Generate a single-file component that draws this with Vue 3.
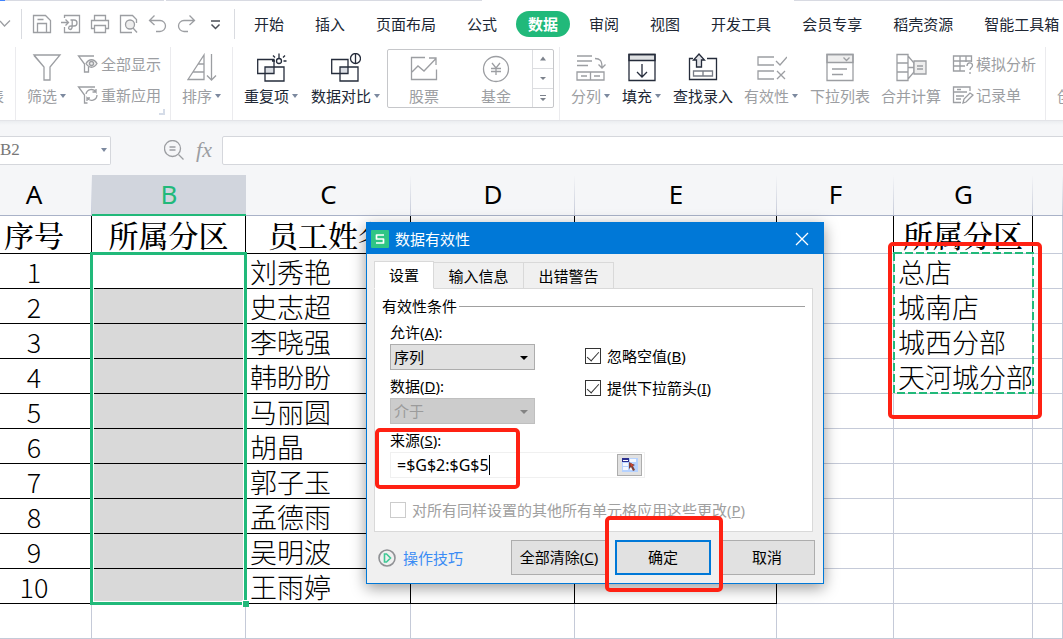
<script setup>
import { ref } from 'vue'

const menus = ['开始', '插入', '页面布局', '公式', '数据', '审阅', '视图', '开发工具', '会员专享', '稻壳资源', '智能工具箱']
const activeMenu = ref('数据')

const columns = ['A', 'B', 'C', 'D', 'E', 'F', 'G', 'H']
const headings = ['序号', '所属分区', '员工姓名', '', '', '', '所属分区', '']
const names = ['刘秀艳', '史志超', '李晓强', '韩盼盼', '马丽圆', '胡晶', '郭子玉', '孟德雨', '吴明波', '王雨婷']
const branches = ['总店', '城南店', '城西分部', '天河城分部']

const tabs = ['设置', '输入信息', '出错警告']
const activeTab = ref('设置')
const allow = ref('序列')
const compare = ref('介于')
const source = ref('=$G$2:$G$5')
const ignoreBlank = ref(true)
const showArrow = ref(true)
const applyAll = ref(false)
const nameBox = ref('B2')
const formula = ref('')
</script>

<template>
  <div class="app">
    <div class="strip"><i class="s-blue"></i><i class="s-one"></i><i class="s-two"></i><i class="s-gap"></i><i class="s-three"></i></div>

    <header class="menubar">
      <div class="quick">
        <button class="q-more" aria-label="文件菜单"><svg width="11" height="20" viewBox="0 0 11 20"><path d="M0 7l4.500 5L10 6.500" /></svg></button>
        <i class="bar"></i>
        <div class="q-icons">
          <button aria-label="保存"><svg width="20" height="20" viewBox="0 0 20 20"><path d="M1.500 1.500h12l5 5v12h-17zM5.500 18V9.500h9V18M5.500 5.500h6" /></svg></button>
          <button aria-label="输出为PDF"><svg width="20" height="20" viewBox="0 0 20 20"><path d="M3.500 4V1.500h15v17h-15V13M0 8.500h7M4.500 5.500l3 3-3 3M9.500 6h3.500a3 3 0 0 1 0 6h-3c-3 0-3 3.500-.8 3.500 2 0 2-2 2-3.500V6" /></svg></button>
          <button aria-label="打印"><svg width="20" height="20" viewBox="0 0 20 20"><path d="M4.500 6V1.500h11V6M4.500 14.500h-3v-8h17v8h-3M4.500 11.500h11v7h-11z" /></svg></button>
          <button aria-label="打印预览"><svg width="20" height="20" viewBox="0 0 20 20"><path d="M13 18.500H1.500v-17h12l4 4V9M1.500 5v13" /><circle cx="11" cy="10.500" r="4.500" fill="#eee" /><path d="M14 14l4 4.500" /></svg></button>
          <button aria-label="撤销"><svg width="20" height="20" viewBox="0 0 20 20"><path d="M6.500 1.500l-5 5 5 4.500M2 6.500h10a5 5 0 0 1 0 11H8" /></svg></button>
          <button aria-label="恢复"><svg width="20" height="20" viewBox="0 0 20 20"><path d="M12.500 1.500l5 5-5 4.500M17 6.500H7a5 5 0 0 0 0 11h4" /></svg></button>
          <button aria-label="自定义快速访问"><svg width="20" height="20" viewBox="0 0 20 20"><path class="dark" d="M5 7h9M5.500 10.500l4 4 4-4" /></svg></button>
        </div>
        <i class="bar"></i>
      </div>
      <nav class="menus">
        <button v-for="m in menus" :key="m" :class="{ active: m === activeMenu }" @click="activeMenu = m">{{ m }}</button>
      </nav>
    </header>

    <section class="ribbon">
      <div class="cut-left">表</div>
      <div class="group g-filter">
        <button class="tool off">
          <svg width="30" height="30" viewBox="0 0 30 30"><path d="M2 2h26L18 14v13h-6V14zM2 2.500L12 14" /></svg>
          <span>筛选<i class="caret"></i></span>
        </button>
        <div class="stack">
          <button class="mini off"><svg width="22" height="22" viewBox="0 0 22 22"><path d="M9 3H1.500l6 8v8h4v-5M9 3h8" /><path d="M9 10.500c3-5 8-5 11 0-3 5-8 5-11 0z" fill="#eee" /><circle cx="14.500" cy="10.500" r="2" /></svg>全部显示</button>
          <button class="mini off"><svg width="22" height="22" viewBox="0 0 22 22"><path d="M18 3H1.500l6 8v8h3M9 10a5.500 5.500 0 0 1 10-2v-3M19 8h-3.500M20 11a5.500 5.500 0 0 1-10 3v3M10 14h3" /></svg>重新应用</button>
        </div>
        <i class="corner"></i>
      </div>
      <div class="group g-sort">
        <button class="tool off">
          <svg width="30" height="30" viewBox="0 0 30 30"><path d="M1 26.500L17 2v24.500zM11 11h6M6 19h11M24.500 1v26M20 22.500l4.500 4.500 4.500-4.500" /></svg>
          <span>排序<i class="caret"></i></span>
        </button>
      </div>
      <div class="group g-data">
        <button class="tool">
          <svg width="30" height="30" viewBox="0 0 30 30"><path d="M8 14h9v7H8z" fill="#dcdfe5" stroke="none" /><path d="M.700 6.500H17v14H.700zM8 14h19v14H8zM22 5.500v-5M16 2.500l2 2M28 2.500l-2 2M15 8h3M26.500 8h3" /><circle cx="22" cy="8" r="2.500" /></svg>
          <span>重复项<i class="caret"></i></span>
        </button>
        <button class="tool">
          <svg width="30" height="30" viewBox="0 0 30 30"><path d="M9 14h8v7H9z" fill="#dcdfe5" stroke="none" /><path d="M.700 6.500H17v14H.700zM9 14h18v14H9z" /><circle cx="24.500" cy="5.500" r="5" fill="#fff" /><path d="M24.500.500v10" /></svg>
          <span>数据对比<i class="caret"></i></span>
        </button>
        <div class="gallery">
          <button class="tool off"><svg width="28" height="28" viewBox="0 0 28 28"><path d="M15 2.500H1.500v22h25v-10M2 17l6-6 6 5L26 3.500M19 3h7v7" /></svg><span>股票</span></button>
          <button class="tool off"><svg width="28" height="28" viewBox="0 0 28 28"><circle cx="14" cy="14" r="12.500" /><path d="M10 8l4 5 4-5M9 13.500h10M9 16.500h10M14 13v7" /></svg><span>基金</span></button>
          <div class="spin">
            <button aria-label="向上"><svg width="8" height="8" viewBox="0 0 8 8"><path class="solid" d="M1 5.500l3-4 3 4z" /></svg></button>
            <button aria-label="向下"><svg width="8" height="8" viewBox="0 0 8 8"><path class="solid" d="M1 3l3 3 3-3z" /></svg></button>
            <button aria-label="更多"><svg width="8" height="8" viewBox="0 0 8 8"><path class="solid" d="M1 1h6v1H1zM1 4l3 3 3-3z" /></svg></button>
          </div>
        </div>
      </div>
      <div class="group g-tools">
        <button class="tool off">
          <svg width="30" height="30" viewBox="0 0 30 30"><path d="M1 3h15M1 8h15M1 12.500h11M1 19h27v8H1zM14.500 19v8M5 23h6M18 23h6M19 5.500c5 0 7 2 7 9M22.500 11.500l3.500 3.500 3.500-3.500" /></svg>
          <span>分列<i class="caret"></i></span>
        </button>
        <button class="tool">
          <svg width="30" height="30" viewBox="0 0 30 30"><path d="M2 1.500h26v6H2z" fill="#dfe1e3" /><path d="M2 1.500h26v26H2zM15 11v13M10 19l5 5 5-5" /></svg>
          <span>填充<i class="caret"></i></span>
        </button>
        <button class="tool">
          <svg width="30" height="30" viewBox="0 0 30 30"><path d="M5 5.500H1.500v21h27v-21H19" /><path d="M5.500 18h19v5h-19zM15 18v5" class="thin" /><path d="M8.500 14V7H5.500L11 1l5.500 6h-3v7z" fill="#dfe1e6" /></svg>
          <span>查找录入</span>
        </button>
        <button class="tool off">
          <svg width="30" height="30" viewBox="0 0 30 30"><path d="M17 4H1v8h16M17 18H1v8h16M19 8l4 4 7-8M20 18l8 8M28 18l-8 8" /></svg>
          <span>有效性<i class="caret"></i></span>
        </button>
        <button class="tool off">
          <svg width="30" height="30" viewBox="0 0 30 30"><path d="M2 1.500h26v8H2z" fill="#eee" /><path d="M2 1.500h26v26H2zM18.500 4.500l3 3 3-3M7 16h15M7 21.500h11" /></svg>
          <span>下拉列表</span>
        </button>
        <button class="tool off">
          <svg width="32" height="30" viewBox="0 0 32 30"><path d="M2 1.500h11v26H2zM2 10h11M2 19h11M13 3l6 7v9l-6 7M13 14.500h6" /><path d="M19 8h12v13H19z" fill="#eee" /><path d="M22 13h6M22 16h6" /></svg>
          <span>合并计算</span>
        </button>
        <div class="stack">
          <button class="mini off"><svg width="22" height="22" viewBox="0 0 22 22"><path d="M13 18H1.500V3h18v6M1.500 8h18M1.500 13H13M8 3v15M14 3v6" /><path d="M15 13c0-4 5.500-4 5.500-.5 0 2-2.500 2-2.500 4.500M18 19v2" /></svg>模拟分析</button>
          <button class="mini off"><svg width="22" height="22" viewBox="0 0 22 22"><path d="M18 7V3H1.500v5H15M1.500 8v10.500H9M5 5.500h4M4 12h8M4 15h5M11 19l1-4 6-6 3 2-7 7z" /></svg>记录单</button>
        </div>
      </div>
      <div class="cut-right">创</div>
    </section>

    <section class="formula-bar">
      <div class="namebox"><input v-model="nameBox" aria-label="名称框"><i class="caret"></i></div>
      <button class="zoom" aria-label="查找"><svg width="20" height="20" viewBox="0 0 20 20"><circle cx="8.500" cy="8.500" r="8" /><path d="M14.500 14.500l5 5M5.500 7h6M5.500 10h6" /></svg></button>
      <button class="fx" aria-label="插入函数"><i>fx</i></button>
      <input v-model="formula" class="formula" aria-label="编辑栏">
    </section>

    <main class="sheet">
      <table>
        <colgroup><col v-for="c in columns" :key="c" :class="'col-' + c"></colgroup>
        <thead>
          <tr><th v-for="c in columns" :key="c" :class="{ picked: c === 'B' }">{{ c === 'H' ? '' : c }}</th></tr>
        </thead>
        <tbody>
          <tr class="head">
            <td v-for="(h, i) in headings" :key="i" :class="{ boxed: i < 5, side: i === 5 || i === 6 }">{{ h }}</td>
          </tr>
          <tr v-for="(n, i) in names" :key="n">
            <td class="boxed num">{{ i + 1 }}</td>
            <td class="boxed" :class="{ shade: i > 0 }"></td>
            <td class="boxed">{{ n }}</td>
            <td class="boxed"></td>
            <td class="boxed"></td>
            <td></td>
            <td>{{ branches[i] }}</td>
            <td></td>
          </tr>
          <tr><td v-for="c in columns" :key="c"></td></tr>
        </tbody>
      </table>
      <div class="selection"><i></i></div>
      <svg class="ants" width="141" height="142"><rect x="1" y="1" width="139" height="140" /></svg>
    </main>

    <form class="dialog" role="dialog" aria-label="数据有效性" @submit.prevent>
      <div class="title">
        <svg class="logo" width="18" height="18" viewBox="0 0 18 18"><rect width="18" height="18" rx="1" fill="#2fc585" /><path d="M13 5H5.500v4h7v4H5" fill="none" stroke="#fff" stroke-width="1.700" stroke-linejoin="round" /></svg>
        <span>数据有效性</span>
        <button type="button" aria-label="关闭"><svg width="14" height="14" viewBox="0 0 14 14"><path d="M1 1l12 12M13 1L1 13" fill="none" stroke="#fff" stroke-width="1.300" /></svg></button>
      </div>
      <div class="tabs">
        <button v-for="t in tabs" :key="t" type="button" :class="{ on: t === activeTab }" @click="activeTab = t">{{ t }}</button>
      </div>
      <div class="panel">
        <div class="legend">有效性条件</div>
        <div class="fields">
          <div class="left">
            <label for="allow">允许(<u>A</u>):</label>
            <div class="select"><select id="allow" v-model="allow"><option>序列</option></select></div>
            <label for="compare">数据(<u>D</u>):</label>
            <div class="select dim"><select id="compare" v-model="compare" disabled><option>介于</option></select></div>
          </div>
          <div class="right">
            <label><input v-model="ignoreBlank" type="checkbox">忽略空值(<u>B</u>)</label>
            <label><input v-model="showArrow" type="checkbox">提供下拉箭头(<u>I</u>)</label>
          </div>
        </div>
        <div class="source">
          <label for="source">来源(<u>S</u>):</label>
          <div class="source-box">
            <div class="edit"><input id="source" v-model="source" size="8"><i></i></div>
            <button type="button" aria-label="选择区域"><svg width="16" height="14" viewBox="0 0 16 14"><rect width="16" height="14" fill="#b5d2ff" /><path d="M1 5h5v3H1zM1 9h5v3H1zM8 1h6v3H8zM8 5h3v3H8zM8 9h3v3H8z" fill="#f4f8ff" /><path d="M0 0h7v4H0z" fill="#2b2f8f" /><path d="M1 2h5v1H1z" fill="#fff" /><path d="M7 4l6 3-2 1 2 4-2 1-2-4-2 2z" fill="#7d4038" /><path d="M8 5l3 2-1 2z" fill="#e5432c" /></svg></button>
          </div>
        </div>
        <label class="apply"><input v-model="applyAll" type="checkbox" disabled>对所有同样设置的其他所有单元格应用这些更改(<u>P</u>)</label>
      </div>
      <div class="actions">
        <a href="#"><svg width="18" height="18" viewBox="0 0 18 18"><circle cx="9" cy="9" r="8" fill="none" stroke="#8f9194" stroke-width="1.600" /><path d="M6.500 5v8h2l4-4-4-4z" fill="none" stroke="#3fc895" stroke-width="1.600" /></svg>操作技巧</a>
        <button type="button">全部清除(<u>C</u>)</button>
        <button type="submit" class="ok">确定</button>
        <button type="button">取消</button>
      </div>
    </form>

    <div class="mark mark-source"></div>
    <div class="mark mark-ok"></div>
    <div class="mark mark-list"></div>
  </div>
</template>

<style>
html, body { background: #fff; overflow: hidden; }
</style>

<style scoped>
* { box-sizing: border-box; }
.app { position: relative; overflow: hidden; font-family: "Noto Sans", "Noto Sans CJK SC", sans-serif; font-size: 15px; line-height: 20px; color: #202734; white-space: nowrap; }
button { border: 0; padding: 0; margin: 0; background: none; font: inherit; color: inherit; white-space: nowrap; }
input, select { font: inherit; color: inherit; margin: 0; min-width: 0; outline: none; }
svg { display: block; flex: none; }

.strip { display: flex; height: 1px; }
.strip i { background: #d8dae2; }
.s-blue { width: 5px; }
.strip .s-blue { background: #4184ff; }
.s-one { width: 159px; }
.s-two { width: 316px; margin-left: 2px; }
.s-gap { width: 312px; }
.strip .s-gap { background: #fff; }
.s-three { flex: 1; }

.menubar { display: flex; align-items: center; height: 46px; }
.quick { display: flex; align-items: center; flex: none; }
.quick svg, .zoom svg { fill: none; stroke: #9c9ea2; stroke-width: 1.300; }
.quick .dark { stroke: #4b4f57; stroke-width: 1.500; }
.bar { width: 1px; height: 30px; background: #d9dbe0; }
.q-more { margin-right: 10px; }
.q-icons { display: flex; gap: 9px; margin: 0 8px 0 10px; }
.menus { display: flex; gap: 7px; margin-left: 7px; }
.menus button { flex: none; height: 26px; padding: 0 12px; border-radius: 13px; }
.menus .active { background: #21b97a; color: #fff; font-weight: 700; }

.ribbon { display: flex; height: 74px; border-bottom: 1px solid #e3e4e8; overflow: hidden; }
.cut-left { width: 16px; flex: none; padding-top: 39px; text-indent: -11px; color: #9c9ea2; overflow: hidden; border-right: 1px solid #ebebee; }
.cut-right { padding: 39px 0 0 11px; color: #9c9ea2; }
.group { display: flex; flex: none; position: relative; border-right: 1px solid #ebebee; }
.g-filter { padding-left: 11px; width: 155px; gap: 10px; }
.g-sort { padding-left: 11px; width: 62px; }
.g-data { padding-left: 11px; width: 327px; gap: 12px; }
.g-tools { padding-left: 11px; width: 486px; gap: 11px; }
.tool { display: flex; flex-direction: column; align-items: center; gap: 3px; padding-top: 6px; height: 60px; flex: none; }
.tool span { display: flex; align-items: center; }
.tool svg, .mini svg { fill: none; stroke: #252c3b; stroke-width: 1.300; }
.off { color: #9c9ea2; }
.tool.off svg, .mini.off svg { stroke: #9c9ea2; }
.tool .thin { stroke: #777c86; }
.caret { flex: none; border: 3px solid transparent; border-top: 4px solid #7c899f; border-bottom: 0; margin: 0 1px 0 3px; }
.stack { display: flex; flex-direction: column; gap: 9px; padding-top: 6px; }
.mini { display: flex; align-items: center; gap: 2px; height: 22px; }
.corner { position: absolute; right: 5px; bottom: 5px; width: 6px; height: 6px; border: solid #d5dce8; border-width: 0 2px 2px 0; }
.gallery { display: flex; width: 167px; height: 59px; margin: 2px 0 0 -6px; border: 1px solid #c6c7ca; border-radius: 2px; }
.gallery .tool { width: 72px; padding-top: 5px; }
.spin { flex: 1; display: flex; flex-direction: column; border-left: 1px solid #dcdde0; }
.spin button { flex: 1; display: flex; align-items: center; justify-content: center; border-bottom: 1px solid #dcdde0; }
.spin button:last-child { border-bottom: 0; }
.solid { fill: #7c828c; stroke: none; }

.formula-bar { display: flex; align-items: center; height: 54px; padding-top: 4px; background: linear-gradient(#ebedf0, #f5f6f8 4px); }
.namebox { display: flex; align-items: center; width: 111px; height: 29px; flex: none; background: #fff; border: 1px solid #d5d7dc; border-left: 0; border-radius: 0 2px 2px 0; padding-right: 2px; }
.namebox input { flex: 1; border: 0; padding: 0; background: none; font: 17px "Liberation Serif", serif; color: #777; }
.zoom { margin-left: 53px; }
.fx { width: 20px; margin-left: 10px; color: #9c9ea2; font: 22px "Liberation Serif", serif; }
.formula { flex: 1; height: 29px; margin: 0 -3px 0 8px; background: #fff; border: 1px solid #d5d7dc; border-radius: 2px; }

.sheet { position: relative; }
table { width: 100%; table-layout: fixed; border-collapse: separate; border-spacing: 0; color: #000; }
.col-A { width: 92px; }
.col-B { width: 154px; }
.col-C { width: 165px; }
.col-D { width: 164px; }
.col-E { width: 202px; }
.col-F { width: 117px; }
.col-G { width: 139px; }
th { height: 41px; padding: 0 0 2px; background: linear-gradient(#f5f6f8, #c5cad8) right / 1px 100% no-repeat #f5f6f8; border-bottom: 1px solid #a9b2c8; font: 400 26px/36px "Noto Sans", sans-serif; }
th.picked { background: #d1d5dd; color: #21b97a; border-bottom: 2px solid #21b97a; }
td { height: 35px; padding: 2px 0 0 4px; border: solid #c5cad8; border-width: 0 1px 1px 0; font: 300 27px/32px "Noto Sans CJK SC", sans-serif; }
.boxed { border-color: #000; }
.head td { height: 38px; padding: 0; text-align: center; font: 500 30px/37px "Noto Serif CJK SC", "Liberation Serif", serif; }
.head .side { border-right-color: #000; }
th:first-child { padding-right: 24px; }
.head td:first-child, td.num { padding-right: 23px; padding-left: 0; text-align: center; }
.shade { background: #d9d9d9; }
.selection { position: absolute; left: 90px; top: 77px; width: 157px; height: 353px; border: 3px solid #21b97a; box-shadow: inset 0 0 0 1px #fff; }
.selection i { position: absolute; right: -5px; bottom: -5px; width: 7px; height: 7px; background: #21b97a; border: solid #fff; border-width: 1px 0 0 1px; }
.ants { position: absolute; left: 893px; top: 77px; fill: none; stroke: #21b97a; stroke-width: 2; stroke-dasharray: 8 3; }

.dialog { position: absolute; left: 366px; top: 222px; width: 458px; background: #f0f0f0; border: 1px solid #0078d7; color: #000; box-shadow: 0 4px 14px rgba(0, 0, 0, .4); }
.title { display: flex; align-items: center; gap: 6px; height: 31px; padding: 0 14px 0 4px; background: #0078d7; color: #fff; }
.title span { flex: 1; }
.tabs { display: flex; align-items: flex-end; height: 35px; margin: 0 0 -1px 7px; position: relative; }
.tabs button { width: 90px; height: 27px; border: 1px solid #d9d9d9; border-left: 0; }
.tabs .on { width: 60px; height: 28px; background: #fff; border-left: 1px solid #d9d9d9; border-bottom-color: #fff; }
.panel { margin: 0 10px 0 7px; height: 244px; padding: 7px 7px 0; background: #fff; border: 1px solid #d9d9d9; }
.legend { display: flex; align-items: center; gap: 2px; }
.legend::after { content: ""; flex: 1; height: 1px; background: #a0a0a0; }
.fields { display: flex; gap: 50px; padding: 6px 0 0 8px; }
.left { width: 145px; }
.left label, .source label { display: block; height: 22px; }
.select { position: relative; margin-bottom: 6px; }
.select select { display: block; width: 100%; height: 26px; padding: 0 3px; appearance: none; background: #e1e1e1; border: 1px solid #adadad; border-radius: 0; opacity: 1; }
.select::after { content: ""; position: absolute; right: 7px; top: 12px; border: 4px solid transparent; border-top-color: #000; border-bottom: 0; }
.select.dim select { background: #ccc; border-color: #bfbfbf; color: #9b9b9b; }
.select.dim::after { border-top-color: #838383; }
.right { display: flex; flex-direction: column; gap: 12px; padding-top: 24px; }
.right label, .apply { display: flex; align-items: center; }
input[type="checkbox"] { appearance: none; flex: none; width: 16px; height: 16px; margin-right: 6px; border: 1px solid #333; background: #fff; display: grid; place-items: center; }
input[type="checkbox"]:checked::before { content: ""; width: 5px; height: 11px; border: solid #333; border-width: 0 1px 1px 0; transform: rotate(42deg); margin-top: -3px; }
input[type="checkbox"]:disabled { border-color: #ccc; }
.source { padding-left: 8px; }
.source-box { display: flex; align-items: center; justify-content: space-between; width: 255px; height: 26px; padding: 0 2px 0 6px; border: 1px solid #f0f0f0; }
.edit { display: flex; align-items: center; }
.edit input { field-sizing: content; border: 0; padding: 0; background: none; font-size: 16px; }
.edit i { width: 1px; height: 20px; background: #000; }
.source-box button { display: grid; place-items: center; width: 25px; height: 22px; background: #e1e1e1; border: 1px solid #adadad; }
.apply { margin: 22px 0 0 8px; color: #a0a0a0; }
.actions { display: flex; align-items: center; gap: 8px; padding: 8px 8px 8px 11px; }
.actions a { display: flex; align-items: center; gap: 7px; margin-right: auto; color: #3b8cf5; text-decoration: none; }
.actions button { width: 96px; height: 35px; padding-bottom: 2px; background: #e1e1e1; border: 1px solid #adadad; }
.actions .ok { border: 2px solid #0078d7; }

.mark { position: absolute; border: 4px solid #ff2113; border-radius: 5px; pointer-events: none; }
.mark-source { left: 375px; top: 428px; width: 145px; height: 61px; }
.mark-ok { left: 605px; top: 516px; width: 118px; height: 76px; }
.mark-list { left: 888px; top: 242px; width: 154px; height: 177px; }
</style>
